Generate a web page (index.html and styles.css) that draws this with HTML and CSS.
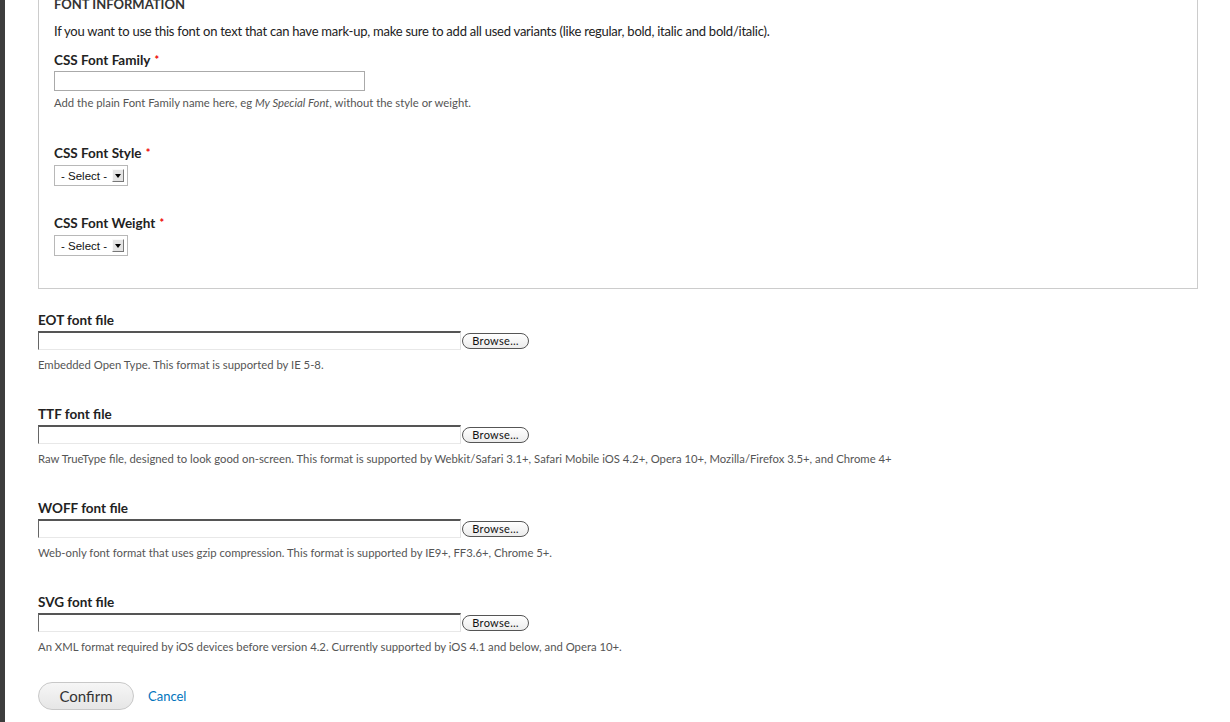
FILE: index.html
```html
<!DOCTYPE html>
<html lang="en">
<head>
<meta charset="utf-8">
<title>Font information</title>
<link rel="stylesheet" href="styles.css">
</head>
<body>
<div class="shell">
  <div class="side-bar"></div>
  <main class="page">
    <fieldset class="group">
      <h2 class="group-title">Font information</h2>
      <p class="intro">If you want to use this font on text that can have mark-up, make sure to add all used variants (like regular, bold, italic and bold/italic).</p>

      <div class="item item-family">
        <label class="label">CSS Font Family <span class="req">*</span></label>
        <div class="text-input"></div>
        <div class="desc">Add the plain Font Family name here, eg <em>My Special Font</em>, without the style or weight.</div>
      </div>

      <div class="item item-style">
        <label class="label">CSS Font Style <span class="req">*</span></label>
        <div class="select"><span class="select-text">- Select -</span><span class="select-arrow"><span class="tri"></span></span></div>
      </div>

      <div class="item item-weight">
        <label class="label">CSS Font Weight <span class="req">*</span></label>
        <div class="select"><span class="select-text">- Select -</span><span class="select-arrow"><span class="tri"></span></span></div>
      </div>
    </fieldset>

    <div class="file-item first">
      <label class="label">EOT font file</label>
      <div class="file-field"><span class="file-box"></span><span class="browse">Browse…</span></div>
      <div class="desc">Embedded Open Type. This format is supported by IE 5-8.</div>
    </div>

    <div class="file-item">
      <label class="label">TTF font file</label>
      <div class="file-field"><span class="file-box"></span><span class="browse">Browse…</span></div>
      <div class="desc">Raw TrueType file, designed to look good on-screen. This format is supported by Webkit/Safari 3.1+, Safari Mobile iOS 4.2+, Opera 10+, Mozilla/Firefox 3.5+, and Chrome 4+</div>
    </div>

    <div class="file-item">
      <label class="label">WOFF font file</label>
      <div class="file-field"><span class="file-box"></span><span class="browse">Browse…</span></div>
      <div class="desc">Web-only font format that uses gzip compression. This format is supported by IE9+, FF3.6+, Chrome 5+.</div>
    </div>

    <div class="file-item">
      <label class="label">SVG font file</label>
      <div class="file-field"><span class="file-box"></span><span class="browse">Browse…</span></div>
      <div class="desc">An XML format required by iOS devices before version 4.2. Currently supported by iOS 4.1 and below, and Opera 10+.</div>
    </div>

    <div class="actions">
      <button class="confirm" type="button">Confirm</button>
      <a class="cancel" href="#">Cancel</a>
    </div>
  </main>
</div>
</body>
</html>
```

FILE: styles.css
```css
* { box-sizing: border-box; }

html, body {
  margin: 0;
  padding: 0;
  background: #fff;
  overflow: hidden;
}

body {
  font-family: "Lato", "Open Sans", sans-serif;
  color: #333;
}

.shell {
  display: flex;
  min-height: 722px;
}

.side-bar {
  width: 5px;
  flex: 0 0 5px;
  background: #3d3d3d;
}

.page {
  flex: 1;
  padding: 0 32px 0 33px;
  margin-top: -5px;
}

.group {
  margin: 0;
  border: 1px solid #cccccc;
  border-top: none;
  padding: 0 15px 32px 15px;
  min-width: 0;
}

.group-title {
  margin: 0;
  font-size: 13px;
  line-height: 18px;
  font-weight: 700;
  text-transform: uppercase;
  color: #333;
}

.intro {
  margin: 9px 0 0 0;
  font-size: 13px;
  line-height: 18px;
  letter-spacing: -0.24px;
  color: #222;
}

.label {
  display: block;
  font-size: 13.5px;
  line-height: 18px;
  font-weight: 700;
  color: #222;
}

.req {
  color: #e00;
  font-size: 11px;
  vertical-align: top;
  margin-left: 1px;
}

.item-family { margin-top: 11px; }
.item-style { margin-top: 33px; }
.item-weight { margin-top: 28px; }

.text-input {
  margin-top: 2px;
  width: 311px;
  height: 20px;
  border: 1px solid #aaa;
  background: #fff;
}

.desc {
  margin-top: 4px;
  font-size: 11.3px;
  line-height: 16px;
  color: #555;
}

.select {
  margin-top: 3px;
  width: 74px;
  height: 21px;
  border: 1px solid #b8b8b8;
  display: flex;
  align-items: center;
  padding: 0 3px 0 6px;
  background: #fff;
  font-family: "Liberation Sans", Arial, sans-serif;
  font-size: 11.5px;
  color: #111;
}

.select-text {
  flex: 1;
  white-space: nowrap;
}

.select-arrow {
  width: 12px;
  height: 13px;
  background: #e4e4e4;
  border-top: 1px solid #fafafa;
  border-left: 1px solid #fafafa;
  border-right: 1px solid #777;
  border-bottom: 1px solid #777;
  display: flex;
  align-items: center;
  justify-content: center;
}

.tri {
  width: 0;
  height: 0;
  border-left: 3px solid transparent;
  border-right: 3px solid transparent;
  border-top: 4px solid #000;
}

.file-item { margin-top: 32px; }
.file-item.first { margin-top: 22px; }

.file-item .desc { margin-top: 7px; }

.file-field {
  margin-top: 2px;
  display: flex;
  align-items: center;
  height: 19px;
}

.file-box {
  width: 423px;
  height: 19px;
  border-top: 2px solid #555;
  border-left: 1px solid #666;
  border-right: 1px solid #e2e2e2;
  border-bottom: 1px solid #e8e8e8;
  background: #fff;
}

.browse {
  margin-left: 1px;
  width: 67px;
  height: 16px;
  border: 1px solid #555;
  border-radius: 8px;
  background: linear-gradient(#ffffff, #ececec);
  font-family: "Lato", sans-serif;
  font-size: 11px;
  line-height: 14px;
  text-align: center;
  color: #111;
  letter-spacing: 0.3px;
}

.actions {
  margin-top: 27px;
  display: flex;
  align-items: center;
  gap: 14px;
}

.confirm {
  width: 96px;
  height: 28px;
  border: 1px solid #c8c8c8;
  border-radius: 14px;
  background: linear-gradient(#f6f6f6, #e6e6e6);
  font-family: "Lato", sans-serif;
  font-size: 15px;
  color: #333;
  padding: 0;
}

.cancel {
  font-size: 13px;
  color: #0074bd;
  text-decoration: none;
}
```
